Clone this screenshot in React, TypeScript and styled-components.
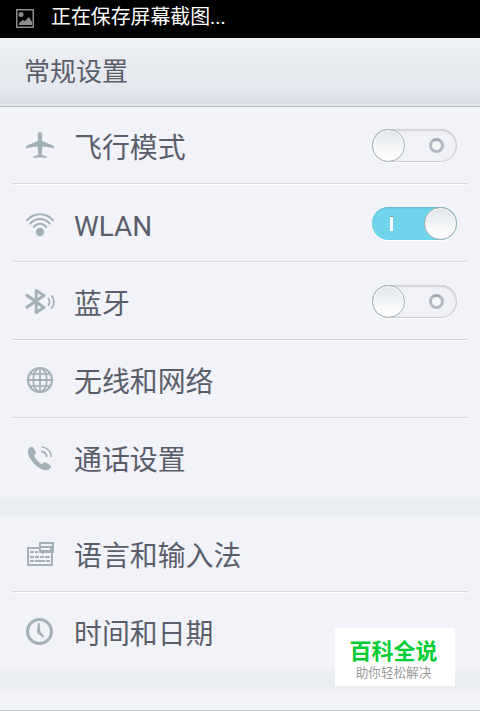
import type { ReactNode } from 'react';
import styled, { createGlobalStyle } from 'styled-components';

const colors = {
  text: '#5a5e6b',
  icon: '#a3b0b8',
  background: '#f1f3f8',
  gap: '#eaedf2',
  divider: '#d6d8dd',
  active: '#70d5ea',
  brand: '#00cc33',
};

type TSettingItem = {
  label: string;
  icon: ReactNode;
  isOn?: boolean;
};

const AirplaneIcon = () => (
  <Icon>
    <path d="M15 1c1.400 0 2.200 1.200 2.200 2.600v6.400l10.600 4.400c1 .5 1.300 1.200 1.300 3.100-4.200-1.300-8.300-1.700-11.800-1.700l-.6 8 4.600 1.600c.6.300.7.800.7 1.700-2.600-.5-4.800-.8-7-.8s-4.400.3-7 .8c0-.9.1-1.400.7-1.700l4.600-1.600-.6-8c-3.500 0-7.600.4-11.800 1.700 0-1.900.3-2.600 1.300-3.100L12.800 10V3.600C12.800 2.200 13.600 1 15 1z" />
  </Icon>
);

const WifiIcon = () => (
  <Icon>
    <circle cx="15" cy="23" r="4.200" />
    <g fill="none" stroke={colors.icon} strokeWidth="2" strokeLinecap="round">
      <path d="M2 11.200C9.200 3.200 20.800 3.200 28 11.200" />
      <path d="M5.200 14.600C10.800 8.300 19.200 8.300 24.800 14.600" />
      <path d="M8.800 17.900C12.300 13.800 17.700 13.800 21.200 17.900" />
    </g>
  </Icon>
);

const BluetoothIcon = () => (
  <Icon>
    <g fill="none" stroke={colors.icon} strokeLinecap="round" strokeLinejoin="round">
      <path strokeWidth="2.900" d="M1.900 8.200 19 20.500 11.200 25.500V3.500L19 8.500 1.900 20.300" />
      <path strokeWidth="1.700" d="M23.300 11.400c1.500 2 1.500 5 0 7M26.600 8.800c3 3.400 3 8.800 0 12.200" />
    </g>
  </Icon>
);

const GlobeIcon = () => (
  <Icon>
    <g fill="none" stroke={colors.icon} strokeWidth="1.800">
      <circle cx="15" cy="15" r="12" strokeWidth="2.200" />
      <ellipse cx="15" cy="15" rx="6.800" ry="12" />
      <path d="M15 3v24M3 15h24M5.300 8.800h19.400M5.300 21.200h19.400" />
    </g>
  </Icon>
);

const PhoneIcon = () => (
  <Icon>
    <path d="M4.600 4.500c1.400-1.200 3-.9 3.900.6l2 3.400c.7 1.200.4 2.200-.9 3.400-.7.700-.6 1.300 0 2.200 1.600 2.600 3.500 4.600 6 6.300.9.600 1.500.7 2.200 0 1.200-1.200 2.300-1.400 3.400-.7l3.600 2.300c1.500 1 1.700 2.300.3 3.600-2.200 2.200-5.600 2-9.300.1C10.500 22.900 6 18 3.700 12.600 2.400 9.400 2.500 6.300 4.600 4.500z" />
    <g fill="none" stroke={colors.icon} strokeLinecap="round">
      <path strokeWidth="1.500" d="M17 3.900c5 .2 9.300 4.600 9.300 9.600" />
      <path strokeWidth="1.800" d="M16.800 8.700c2.800.3 4.500 2 4.800 4.700" />
    </g>
  </Icon>
);

const KeyboardIcon = () => (
  <Icon>
    <path
      fill="none"
      stroke={colors.icon}
      strokeWidth="2"
      strokeLinejoin="round"
      d="M14 9H3v17h24V14"
    />
    <path d="M14 3h15v11H19l-2 2v-2h-3z" />
    <path fill={colors.background} d="M16 5h11v2H16zM16 9h9v2h-9z" />
    <path
      fill="none"
      stroke={colors.icon}
      strokeWidth="2"
      d="M5 13h4m1 0h3M5 18h4m1 0h4m1 0h4m1 0h5M5 22h4m1 0h10m1 0h4"
    />
  </Icon>
);

const ClockIcon = () => (
  <Icon>
    <circle cx="14.500" cy="14.500" r="12" fill="none" stroke={colors.icon} strokeWidth="3" />
    <path d="M12.900 6h1.700l.8 9 4 4.200-1.400 1.400-6-4.800z" />
  </Icon>
);

const networkItems: TSettingItem[] = [
  { label: '飞行模式', icon: <AirplaneIcon />, isOn: false },
  { label: 'WLAN', icon: <WifiIcon />, isOn: true },
  { label: '蓝牙', icon: <BluetoothIcon />, isOn: false },
  { label: '无线和网络', icon: <GlobeIcon /> },
  { label: '通话设置', icon: <PhoneIcon /> },
];

const systemItems: TSettingItem[] = [
  { label: '语言和输入法', icon: <KeyboardIcon /> },
  { label: '时间和日期', icon: <ClockIcon /> },
];

const Toggle = ({ isOn }: { isOn: boolean }) => (
  <ToggleTrack $isOn={isOn} role="switch" aria-checked={isOn}>
    {isOn && <OnMark />}
    <ToggleKnob $isOn={isOn} />
    {!isOn && <OffMark />}
  </ToggleTrack>
);

const SettingGroup = ({ items }: { items: TSettingItem[] }) => (
  <GroupWrapper>
    {items.map(({ label, icon, isOn }) => (
      <SettingRow key={label}>
        {icon}
        <RowLabel>{label}</RowLabel>
        {isOn !== undefined && <Toggle isOn={isOn} />}
      </SettingRow>
    ))}
  </GroupWrapper>
);

const App = () => {
  return (
    <>
      <GlobalStyle />
      <ScreenWrapper>
        <StatusBar>
          <svg width="18" height="19" viewBox="0 0 18 19">
            <path fill="none" stroke="#8c8c8c" strokeWidth="1.500" d="M.75.75h16.500v17.500H.75z" />
            <circle cx="5" cy="5.500" r="2.500" fill="#8c8c8c" />
            <path fill="#8c8c8c" d="M3 16v-2l4-3 2 1 4-4 3 5v3z" />
          </svg>
          <span>正在保存屏幕截图...</span>
        </StatusBar>
        <Header>
          <h1>常规设置</h1>
        </Header>
        <SettingGroup items={networkItems} />
        <GroupGap />
        <SettingGroup items={systemItems} />
        <GroupGap />
        <NextGroup />
        <Watermark>
          <strong>百科全说</strong>
          <span>助你轻松解决</span>
        </Watermark>
      </ScreenWrapper>
    </>
  );
};

export default App;

const GlobalStyle = createGlobalStyle`
  * {
    box-sizing: border-box;
  }
  body {
    margin: 0;
    background: ${colors.background};
    font-family: Roboto, 'Noto Sans CJK SC', sans-serif;
  }
`;

const ScreenWrapper = styled.div`
  position: relative;
  display: flex;
  flex-direction: column;
  width: 480px;
  height: 711px;
  overflow: hidden;
  color: ${colors.text};
`;

const StatusBar = styled.div`
  display: flex;
  align-items: flex-start;
  gap: 17px;
  height: 38px;
  padding: 0 16px;
  background: #000;
  color: #fff;
  flex-shrink: 0;
  svg {
    margin-top: 9px;
  }
  span {
    font-size: 19.900px;
    line-height: 36px;
    white-space: nowrap;
  }
`;

const Header = styled.header`
  height: 69px;
  flex-shrink: 0;
  padding-left: 24px;
  border-bottom: 1px solid #b4b8be;
  background: linear-gradient(#eff3f5 0%, #e7eaef 40%, #e5e8ee 75%, #d8dde5 97%, #e6e9ee 98%);
  h1 {
    margin: 0;
    font-size: 26px;
    font-weight: 400;
    line-height: 68px;
  }
`;

const GroupWrapper = styled.section`
  flex-shrink: 0;
  padding: 0 12px;
`;

const SettingRow = styled.div`
  display: flex;
  align-items: flex-start;
  height: 78px;
  padding: 0 11px 0 13px;
  border-bottom: 1px solid transparent;
  &:not(:last-child) {
    border-bottom-color: #fdfdfe;
    box-shadow: inset 0 -1px 0 ${colors.divider};
  }
`;

const Icon = styled.svg.attrs({ viewBox: '0 0 30 30' })`
  width: 30px;
  height: 30px;
  margin-top: 24px;
  flex-shrink: 0;
  fill: ${colors.icon};
`;

const RowLabel = styled.span`
  flex: 1;
  margin-left: 19px;
  font-size: 27.900px;
  line-height: 83px;
  white-space: nowrap;
`;

const ToggleTrack = styled.div<{ $isOn: boolean }>`
  display: flex;
  align-items: center;
  justify-content: space-between;
  width: 85px;
  height: 33px;
  margin-top: 22px;
  border-radius: 17px;
  background: ${({ $isOn }) => ($isOn ? colors.active : '#f1f2f7')};
  box-shadow: ${({ $isOn }) =>
    $isOn
      ? 'inset 0 1px 2px #5bb9cb, 0 1px 0 #fff'
      : 'inset 0 0 0 1px #cdcfd4, inset 0 1px 3px #b5b7bc, 0 1px 0 #fff'};
`;

const ToggleKnob = styled.div<{ $isOn: boolean }>`
  width: 33px;
  height: 33px;
  border: 1px solid ${({ $isOn }) => ($isOn ? '#a4a9ad' : '#a2b0b5')};
  border-radius: 50%;
  background: linear-gradient(#e0e6e9, #fdfdfd 85%);
  box-shadow: inset 0 0 0 1px #fff;
`;

const OnMark = styled.div`
  width: 3px;
  height: 15px;
  margin-left: 18px;
  border-top: 1px solid #5f9fae;
  background: #fff;
`;

const OffMark = styled.div`
  width: 15px;
  height: 15px;
  margin-right: 13px;
  border: 3px solid #b3b8c3;
  border-top-color: #a2a7b2;
  border-radius: 50%;
  background: #f5f6fa;
`;

const GroupGap = styled.div`
  height: 18px;
  flex-shrink: 0;
  background: ${colors.gap};
`;

const NextGroup = styled.div`
  flex: 1;
  border-bottom: 1px solid #c0c5ca;
`;

// floats over the bottom right corner of the list
const Watermark = styled.div`
  position: absolute;
  right: 25px;
  bottom: 25px;
  display: flex;
  flex-direction: column;
  align-items: center;
  width: 120px;
  height: 58px;
  padding: 10px 3px 0 0;
  background: #fff;
  strong {
    color: ${colors.brand};
    font-size: 22px;
    font-weight: 700;
    line-height: 28px;
  }
  span {
    color: #999;
    font-size: 12.600px;
    line-height: 14px;
  }
`;
